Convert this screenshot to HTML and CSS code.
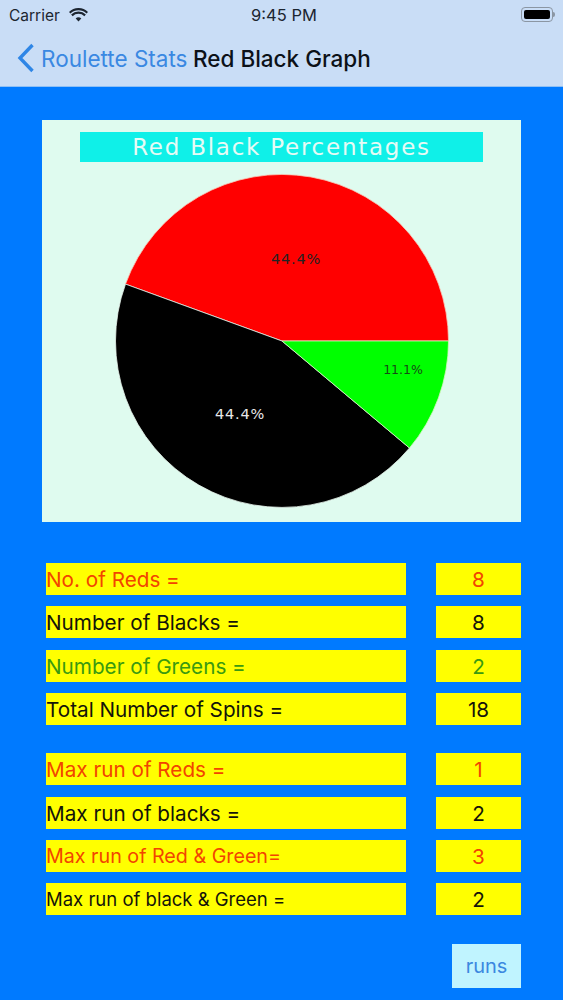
FILE: index.html
```html
<!DOCTYPE html>
<html lang="en">
<head>
    <meta charset="UTF-8">
    <meta name="viewport" content="width=device-width, initial-scale=1.0">
    <title>Red Black Graph</title>
    <link rel="stylesheet" href="styles.css">
</head>
<body>
    <header class="top-bar">
        <div class="status-bar">
            <div class="carrier">
                <span>Carrier</span>
                <svg class="wifi" viewBox="0 0 20 15" width="19" height="14">
                    <path d="M10 14.5 7 11.2a4.2 4.2 0 0 1 6 0z" fill="#1c2530"/>
                    <path d="M2.9 7.3a10 10 0 0 1 14.2 0M.6 4.4a13.4 13.4 0 0 1 18.8 0" transform="translate(0 .6)" fill="none" stroke="#1c2530" stroke-width="2.3"/>
                </svg>
            </div>
            <div class="clock">9:45 PM</div>
            <div class="battery"><span class="battery-level"></span></div>
        </div>
        <nav class="nav-bar">
            <svg class="back-icon" viewBox="0 0 18 30" width="18" height="30">
                <path d="M15.5 2 3 15l12.5 13" fill="none" stroke="#2f86e6" stroke-width="3.4"/>
            </svg>
            <a href="#" class="back-link">Roulette Stats</a>
            <h1 class="page-title">Red Black Graph</h1>
        </nav>
    </header>

    <main class="content">
        <section class="chart-panel">
            <h2 class="chart-title">Red Black Percentages</h2>
            <svg class="pie" viewBox="0 0 340 340" width="340" height="340">
                <!-- centre 170,170 radius 166.5, slices 44.4 / 44.4 / 11.1 -->
                <path d="M170 170 L336.5 170 A166.5 166.5 0 0 0 13.5 113.1 Z" fill="#ff0000" stroke="#f6c9b8" stroke-width="0.8"/>
                <path d="M170 170 L13.5 113.1 A166.5 166.5 0 0 0 297.5 277 Z" fill="#000000" stroke="#e8f5ee" stroke-width="0.8"/>
                <path d="M170 170 L297.5 277 A166.5 166.5 0 0 0 336.5 170 Z" fill="#00ff00" stroke="#d6f5c0" stroke-width="0.8"/>
                <text class="pie-label" x="184" y="93" fill="#222">44.4%</text>
                <text class="pie-label" x="128" y="248" fill="#e8e8e8">44.4%</text>
                <text class="pie-label small" x="291" y="203" fill="#164a16">11.1%</text>
            </svg>
        </section>

        <section class="stats">
            <div class="stat-group">
                <div class="stat-row red"><div class="stat-label">No. of Reds =</div><div class="stat-value">8</div></div>
                <div class="stat-row"><div class="stat-label">Number of Blacks =</div><div class="stat-value">8</div></div>
                <div class="stat-row green"><div class="stat-label">Number of Greens =</div><div class="stat-value">2</div></div>
                <div class="stat-row"><div class="stat-label">Total Number of Spins =</div><div class="stat-value">18</div></div>
            </div>
            <div class="stat-group">
                <div class="stat-row red"><div class="stat-label">Max run of Reds =</div><div class="stat-value">1</div></div>
                <div class="stat-row"><div class="stat-label">Max run of blacks =</div><div class="stat-value">2</div></div>
                <div class="stat-row red"><div class="stat-label snug">Max run of Red &amp; Green=</div><div class="stat-value">3</div></div>
                <div class="stat-row"><div class="stat-label tight">Max run of black &amp; Green =</div><div class="stat-value">2</div></div>
            </div>
        </section>

        <div class="actions">
            <button type="button" class="runs-btn">runs</button>
        </div>
    </main>
</body>
</html>
```
FILE: styles.css
```css
* {
    margin: 0;
    padding: 0;
    box-sizing: border-box;
}

body {
    font-family: Inter, "Liberation Sans", sans-serif;
    background: #007aff;
    width: 563px;
    height: 1000px;
    overflow: hidden;
}

.top-bar {
    height: 87px;
    background: #c9ddf6;
    border-bottom: 1px solid #8fc0f5;
}

.status-bar {
    height: 30px;
    padding: 0 10px 0 9px;
    display: grid;
    grid-template-columns: 1fr auto 1fr;
    align-items: center;
    color: #1c2530;
    font-size: 15.5px;
}

.carrier {
    display: flex;
    align-items: center;
    gap: 9px;
}

.clock {
    margin-left: 6px;
    font-size: 16.5px;
    font-weight: 400;
}

.battery {
    position: relative;
    justify-self: end;
    width: 32px;
    height: 15px;
    margin-top: -2px;
    padding: 2px;
    border: 1px solid #8b96a3;
    border-radius: 4px;
}

.battery::after {
    content: '';
    position: absolute;
    top: 4px;
    right: -3px;
    width: 2px;
    height: 5px;
    background: #8b96a3;
    border-radius: 0 2px 2px 0;
}

.battery-level {
    display: block;
    width: 100%;
    height: 100%;
    background: #000;
    border-radius: 2px;
}

.nav-bar {
    display: flex;
    align-items: center;
    height: 56px;
    padding-left: 17px;
    font-size: 22.5px;
}

.back-icon {
    margin-right: 6px;
}

.back-link {
    color: #3a88e2;
    text-decoration: none;
}

.page-title {
    margin-left: 5.5px;
    color: #0c1118;
    font-size: 22.5px;
    font-weight: 500;
}

.content {
    padding: 33px 42px 0 42px;
}

.chart-panel {
    width: 479px;
    height: 402px;
    padding-top: 12px;
    background: #dffbef;
    display: flex;
    flex-direction: column;
    align-items: center;
}

.chart-title {
    width: 403px;
    height: 30px;
    background: #0ff0e8;
    color: #e6fbf5;
    font-family: "DejaVu Sans", sans-serif;
    font-size: 23px;
    font-weight: 400;
    line-height: 31px;
    text-align: center;
    letter-spacing: 1.75px;
}

.pie {
    display: block;
    margin-top: 9px;
}

.pie-label {
    font-family: "DejaVu Sans", sans-serif;
    font-size: 14.5px;
    text-anchor: middle;
    letter-spacing: 0.8px;
}

.pie-label.small {
    font-size: 12.5px;
    letter-spacing: 0;
}

.stats {
    margin-top: 41px;
    padding-left: 4px;
    display: flex;
    flex-direction: column;
    gap: 28px;
}

.stat-group {
    display: flex;
    flex-direction: column;
    gap: 11.4px;
}

.stat-row {
    display: grid;
    grid-template-columns: 360px 85px;
    grid-template-rows: 32px;
    column-gap: 30px;
    color: #14140a;
    font-size: 20.7px;
    line-height: 33px;
}

.stat-row.red {
    color: #f24400;
}

.stat-row.green {
    color: #3a9a10;
}

.stat-label,
.stat-value {
    background: #ffff00;
}

.stat-value {
    text-align: center;
}

.stat-label.snug {
    font-size: 19.7px;
}

.stat-label.tight {
    font-size: 18.5px;
}

.actions {
    display: flex;
    justify-content: flex-end;
    margin-top: 29px;
}

.runs-btn {
    width: 69px;
    height: 44px;
    border: none;
    background: #c0f4ff;
    color: #3b88e0;
    font-family: inherit;
    font-size: 20px;
}
```
